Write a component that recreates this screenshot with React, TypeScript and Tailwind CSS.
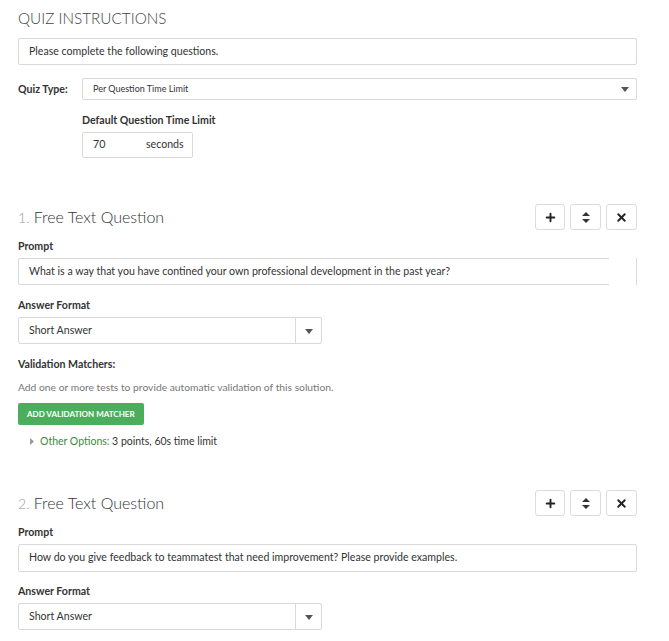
import { Plus, X } from "lucide-react";

const font = { fontFamily: "Lato, 'Open Sans', sans-serif" };

function Caret() {
  return (
    <svg width="8" height="5" viewBox="0 0 8 5" className="text-[#555]">
      <path d="M0 0h8L4 5z" fill="currentColor" />
    </svg>
  );
}

function SortIcon() {
  return (
    <svg width="8" height="11" viewBox="0 0 8 11" className="text-[#333]">
      <path d="M4 0l4 4H0z M4 11L0 7h8z" fill="currentColor" />
    </svg>
  );
}

function ActionButtons() {
  return (
    <div className="flex gap-[5px]">
      <button className="w-[30px] h-[26px] flex items-center justify-center border border-[#dcdcdc] rounded-[3px] bg-white">
        <Plus size={13} strokeWidth={3.5} className="text-[#222]" />
      </button>
      <button className="w-[31px] h-[26px] flex items-center justify-center border border-[#dcdcdc] rounded-[3px] bg-white">
        <SortIcon />
      </button>
      <button className="w-[31px] h-[26px] flex items-center justify-center border border-[#dcdcdc] rounded-[3px] bg-white">
        <X size={13} strokeWidth={3.5} className="text-[#222]" />
      </button>
    </div>
  );
}

function Label({ children, className = "" }: { children: React.ReactNode; className?: string }) {
  return <div className={`text-[10.6px] leading-[14px] font-bold text-[#333] ${className}`}>{children}</div>;
}

function AnswerSelect() {
  return (
    <div className="flex w-[304px] h-[27px] border border-[#d9d9d9] rounded-[2px] bg-white">
      <div className="flex-1 flex items-center pl-[10px] text-[10.6px] text-[#333]">Short Answer</div>
      <div className="w-[26px] border-l border-[#d9d9d9] flex items-center justify-center pt-[2px]">
        <Caret />
      </div>
    </div>
  );
}

function Question({ num, prompt, cut, children }: { num: number; prompt: string; cut?: boolean; children?: React.ReactNode }) {
  return (
    <div>
      <div className="flex items-center justify-between h-[26px]">
        <h2 className="text-[16px] leading-[20px] font-light text-[#333]">
          <span className="text-[#999] text-[14px]">{num}.</span> Free Text Question
        </h2>
        <ActionButtons />
      </div>
      <Label className="mt-[9px]">Prompt</Label>
      {cut ? (
        <div className="mt-[5px] h-[27px] border-r border-[#d9d9d9] pr-[27px]">
          <div className="h-full border-l border-t border-b border-[#d9d9d9] rounded-l-[2px] flex items-center pl-[10px] text-[10.6px] text-[#333]">
            {prompt}
          </div>
        </div>
      ) : (
        <div className="mt-[5px] h-[28px] border border-[#d9d9d9] rounded-[2px] flex items-center pl-[10px] text-[10.6px] text-[#333]">
          {prompt}
        </div>
      )}
      <Label className={cut ? "mt-[13px]" : "mt-[12px]"}>Answer Format</Label>
      <div className="mt-[5px]">
        <AnswerSelect />
      </div>
      {children}
    </div>
  );
}

export default function App() {
  return (
    <div className="min-h-screen bg-white pl-[18px] pr-[32px] pt-[8px]" style={font}>
      <h1 className="text-[15.3px] font-light text-[#444] leading-[20px]">QUIZ INSTRUCTIONS</h1>
      <div className="mt-[10px] h-[27px] border border-[#d9d9d9] rounded-[2px] flex items-center pl-[10px] text-[10.6px] text-[#333]">
        Please complete the following questions.
      </div>

      <div className="mt-[13px] flex items-center">
        <Label className="w-[64px]">Quiz Type:</Label>
        <div className="flex-1 h-[22px] border border-[#d9d9d9] rounded-[2px] flex items-center justify-between pl-[10px] pr-[7px] text-[9px] text-[#333]">
          <span>Per Question Time Limit</span>
          <Caret />
        </div>
      </div>

      <div className="ml-[64px] mt-[13px]">
        <Label>Default Question Time Limit</Label>
        <div className="mt-[5px] w-[111px] h-[26px] border border-[#d9d9d9] rounded-[2px] flex items-center text-[10.6px] text-[#333]">
          <span className="w-[63px] pl-[10px]">70</span>
          <span>seconds</span>
        </div>
      </div>

      <div className="mt-[46px]">
        <Question num={1} cut prompt="What is a way that you have contined your own professional development in the past year?">
          <Label className="mt-[13px]">Validation Matchers:</Label>
          <div className="mt-[9px] text-[10.3px] leading-[14px] text-[#777]">
            Add one or more tests to provide automatic validation of this solution.
          </div>
          <button className="mt-[9px] h-[22px] px-[9px] bg-[#4cae5c] rounded-[2px] text-white text-[8px] font-bold uppercase">
            Add Validation Matcher
          </button>
          <div className="mt-[9px] ml-[12px] flex items-center gap-[6px] text-[10.5px] leading-[14px]">
            <svg width="4" height="7" viewBox="0 0 4 7"><path d="M0 0l4 3.5L0 7z" fill="#999" /></svg>
            <span>
              <span className="text-[#3c8a3c]">Other Options:</span>
              <span className="text-[#333]"> 3 points, 60s time limit</span>
            </span>
          </div>
        </Question>
      </div>

      <div className="mt-[42px]">
        <Question num={2} prompt="How do you give feedback to teammatest that need improvement? Please provide examples." />
      </div>
    </div>
  );
}
